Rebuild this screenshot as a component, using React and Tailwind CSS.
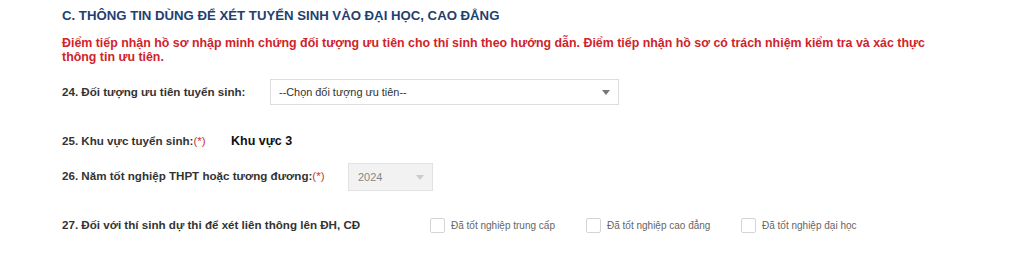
import React from 'react';

const font = { fontFamily: '"Liberation Sans", Arial, sans-serif' };

// Ô chọn kiểu dropdown đơn giản
const Caret = ({ className }) => (
  <svg width="8" height="5" viewBox="0 0 8 5" className={className}>
    <path d="M0 0 L8 0 L4 5 Z" fill="currentColor" />
  </svg>
);

const Checkbox = ({ label }) => (
  <label className="flex items-center gap-[6px]">
    <span className="w-[15px] h-[15px] border border-[#d4d4d4] rounded-[2px] bg-white"></span>
    <span className="text-[10px] text-[#666]">{label}</span>
  </label>
);

export default function App() {
  return (
    <div className="w-[1023px] h-[259px] bg-white overflow-hidden pl-[62px] pt-[8px]" style={font}>
      {/* Tiêu đề mục C */}
      <h2 className="text-[13.2px] font-bold text-[#1d4170] leading-[16px]">
        C. THÔNG TIN DÙNG ĐỂ XÉT TUYỂN SINH VÀO ĐẠI HỌC, CAO ĐẲNG
      </h2>

      {/* Ghi chú màu đỏ */}
      <p className="mt-[12px] w-[880px] text-[12.4px] font-bold text-[#d0232b] leading-[14px]">
        Điểm tiếp nhận hồ sơ nhập minh chứng đối tượng ưu tiên cho thí sinh theo hướng dẫn. Điểm tiếp nhận hồ sơ có trách nhiệm kiểm tra và xác thực thông tin ưu tiên.
      </p>

      {/* 24 */}
      <div className="mt-[15px] flex items-center h-[26px]">
        <span className="w-[208px] text-[11.6px] font-bold text-[#333]">24. Đối tượng ưu tiên tuyển sinh:</span>
        <div className="w-[349px] h-[26px] border border-[#ddd] flex items-center justify-between pl-[8px] pr-[8px]">
          <span className="text-[10.9px] text-[#333]">--Chọn đối tượng ưu tiên--</span>
          <Caret className="text-[#777]" />
        </div>
      </div>

      {/* 25 */}
      <div className="mt-[28px] flex items-center h-[16px]">
        <span className="w-[169px] text-[11.6px] font-bold text-[#333]">
          25. Khu vực tuyển sinh:<span className="font-normal text-[#c0392b]">(*)</span>
        </span>
        <span className="text-[12.5px] font-bold text-[#111]">Khu vực 3</span>
      </div>

      {/* 26 */}
      <div className="mt-[13px] flex items-center h-[28px]">
        <span className="w-[286px] text-[11.6px] font-bold text-[#333]">
          26. Năm tốt nghiệp THPT hoặc tương đương:<span className="font-normal text-[#c0392b]">(*)</span>
        </span>
        <div className="w-[85px] h-[28px] mt-[2px] border border-[#e2e2e2] bg-[#f2f2f2] flex items-center justify-between pl-[9px] pr-[8px]">
          <span className="text-[11px] text-[#888]">2024</span>
          <Caret className="text-[#ccc]" />
        </div>
      </div>

      {/* 27 */}
      <div className="mt-[27px] flex items-center h-[16px]">
        <span className="w-[368px] text-[11.6px] font-bold text-[#333]">27. Đối với thí sinh dự thi để xét liên thông lên ĐH, CĐ</span>
        <div className="w-[156px]"><Checkbox label="Đã tốt nghiệp trung cấp" /></div>
        <div className="w-[155px]"><Checkbox label="Đã tốt nghiệp cao đẳng" /></div>
        <Checkbox label="Đã tốt nghiệp đại học" />
      </div>
    </div>
  );
}
